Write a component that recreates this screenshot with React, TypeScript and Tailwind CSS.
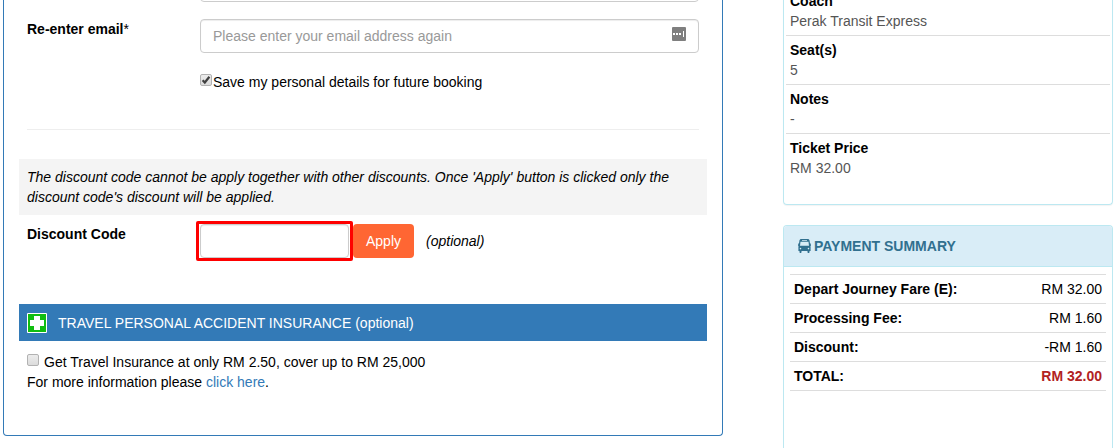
import React from 'react'

const tripDetails = [
  { title: 'Coach', value: 'Perak Transit Express' },
  { title: 'Seat(s)', value: '5' },
  { title: 'Notes', value: '-' },
  { title: 'Ticket Price', value: 'RM 32.00' },
]

const payments = [
  { title: 'Depart Journey Fare (E):', amount: 'RM 32.00' },
  { title: 'Processing Fee:', amount: 'RM 1.60' },
  { title: 'Discount:', amount: '-RM 1.60' },
]

const inputStyle =
  'block h-[34px] rounded border border-[#ccc] bg-white px-3 text-sm shadow-[inset_0_1px_1px_rgba(0,0,0,0.075)] outline-none placeholder:text-[#999]'

const BusIcon = () => (
  <svg width="13" height="14" viewBox="0 0 13 14" fill="currentColor" aria-hidden="true">
    <path
      fillRule="evenodd"
      d="M3.500 0h6c1.300 0 1.900.6 2.100 1.700l.6 4.300c.1.500.4 1.400.4 2V12h-1.100v1c0 .6-.4 1-1 1s-1-.4-1-1v-1h-6v1c0 .6-.4 1-1 1s-1-.4-1-1v-1H.4V8c0-.6.300-1.500.4-2l.6-4.300C1.600.6 2.200 0 3.500 0zM4 1v.7h5V1H4zM2.500 2.800L2 6.800h9l-.5-4h-8zM2.500 8.800a.8.8 0 100 1.600.8.8 0 000-1.600zm8 0a.8.8 0 100 1.600.8.8 0 000-1.600z"
    />
    <path d="M0 4.500h.8v2.500H0zM12.200 4.500h.8v2.500h-.8z" />
  </svg>
)

const CrossIcon = () => (
  <svg width="20" height="20" viewBox="0 0 20 20" aria-hidden="true">
    <rect width="20" height="20" rx="1" fill="#fff" />
    <rect x="1" y="1" width="18" height="18" fill="#10bd10" />
    <path d="M7 3h6v4h4v6h-4v4H7v-4H3V7h4z" fill="#fff" />
  </svg>
)

const PasswordIcon = () => (
  <svg width="14" height="14" viewBox="0 0 14 14" aria-hidden="true">
    <rect width="14" height="14" rx="1" fill="#7f7f7f" />
    <path d="M1 6h2v2H1zM4 6h2v2H4zM7 6h2v2H7z" fill="#fff" />
    <path d="M11 4h1v6h-1z" fill="#fff" />
  </svg>
)

const CheckBox = ({ id, defaultChecked }: { id: string; defaultChecked?: boolean }) => (
  <span className="grid size-3">
    <input
      id={id}
      type="checkbox"
      defaultChecked={defaultChecked}
      className="peer col-start-1 row-start-1 size-3 appearance-none rounded-xs border border-[#b2b2b2] bg-linear-to-b from-[#ececec] to-[#dcdcdc]"
    />
    <svg
      viewBox="0 0 12 12"
      className="pointer-events-none invisible col-start-1 row-start-1 size-3 peer-checked:visible"
      aria-hidden="true"
    >
      <path d="M2.600 6.200l2.200 2.300L9.400 2.700" fill="none" stroke="#404040" strokeWidth="2.200" />
    </svg>
  </span>
)

const BookingForm = () => {
  return (
    <form className="min-w-0 flex-1 self-start rounded-b border border-t-0 border-[#337ab7] px-[15px] pb-[43px]">
      <div className="px-2">
        <div className="flex h-[2px] items-end overflow-hidden pl-[173px]">
          <input type="email" aria-label="Email" className={`${inputStyle} w-full shrink-0`} />
        </div>
        <div className="mt-[17px] flex">
          <label htmlFor="email-again" className="w-[173px] shrink-0 font-bold">
            Re-enter email<span className="font-normal">*</span>
          </label>
          <div className="relative flex-1">
            <input
              id="email-again"
              type="email"
              placeholder="Please enter your email address again"
              className={`${inputStyle} w-full`}
            />
            <span className="absolute top-2 right-[13px]">
              <PasswordIcon />
            </span>
          </div>
        </div>
        <div className="mt-[19px] flex gap-px pl-[173px]">
          <span className="pt-[2px]">
            <CheckBox id="save-details" defaultChecked />
          </span>
          <label htmlFor="save-details">Save my personal details for future booking</label>
        </div>
        <hr className="mt-[37px] border-[#eee]" />
      </div>

      <p className="mt-[29px] bg-[#f4f4f4] p-2 italic">
        The discount code cannot be apply together with other discounts. Once 'Apply' button is clicked only the
        discount code's discount will be applied.
      </p>
      <div className="mt-[6px] flex items-center px-2">
        <label htmlFor="discount" className="mt-[3px] w-[169px] shrink-0 self-start font-bold">
          Discount Code
        </label>
        <div className="rounded-xs border-3 border-[#fe0000] px-px">
          <input id="discount" type="text" className={`${inputStyle} w-[149px]`} />
        </div>
        <button type="button" className="h-[34px] rounded bg-[#ff6633] px-[13px] text-white">
          Apply
        </button>
        <span className="ml-3 italic">(optional)</span>
      </div>

      <h2 className="mt-[43px] flex h-[37px] items-center gap-[11px] bg-[#337ab7] px-2 text-white">
        <CrossIcon />
        TRAVEL PERSONAL ACCIDENT INSURANCE (optional)
      </h2>
      <div className="mt-[11px] px-2">
        <div className="flex gap-[5px]">
          <span className="pt-[2px]">
            <CheckBox id="insurance" />
          </span>
          <label htmlFor="insurance">Get Travel Insurance at only RM 2.50, cover up to RM 25,000</label>
        </div>
        <p>
          For more information please{' '}
          <a href="#" className="text-[#337ab7]">
            click here
          </a>
          .
        </p>
      </div>
    </form>
  )
}

const TripSummary = () => {
  return (
    <dl className="-mt-[13px] divide-y divide-[#ddd] rounded-b border border-t-0 border-[#bce8f1] px-[2px] pb-[22px] shadow-[0_1px_1px_rgba(0,0,0,0.05)]">
      {tripDetails.map((item) => (
        <div key={item.title} className="px-1 py-1">
          <dt className="font-bold">{item.title}</dt>
          <dd className="text-[#555]">{item.value}</dd>
        </div>
      ))}
    </dl>
  )
}

const PaymentSummary = () => {
  return (
    <section className="mt-5 flex-1 rounded-t border border-b-0 border-[#bce8f1]">
      <h2 className="flex h-[41px] items-center gap-[3px] rounded-t-[3px] border-b border-[#bce8f1] bg-[#d9edf7] px-[14px] font-bold text-[#31708f]">
        <BusIcon />
        PAYMENT SUMMARY
      </h2>
      <div className="px-[6px] pt-[7px]">
        <table className="w-full border-b border-[#ddd]">
          <tbody>
            {payments.map((item) => (
              <tr key={item.title} className="border-t border-[#ddd]">
                <th scope="row" className="p-1 text-left font-bold">
                  {item.title}
                </th>
                <td className="p-1 text-right">{item.amount}</td>
              </tr>
            ))}
            <tr className="border-t border-[#ddd] font-bold">
              <th scope="row" className="p-1 text-left">
                TOTAL:
              </th>
              <td className="p-1 text-right text-[#b22222]">RM 32.00</td>
            </tr>
          </tbody>
        </table>
      </div>
    </section>
  )
}

const App = () => {
  return (
    <main className="flex h-screen gap-[60px] overflow-hidden bg-white pr-[5px] pl-[3px] font-['Liberation_Sans',Arial,sans-serif] text-sm/[20px] text-black">
      <BookingForm />
      <aside className="flex w-[330px] shrink-0 flex-col">
        <TripSummary />
        <PaymentSummary />
      </aside>
    </main>
  )
}

export default App
